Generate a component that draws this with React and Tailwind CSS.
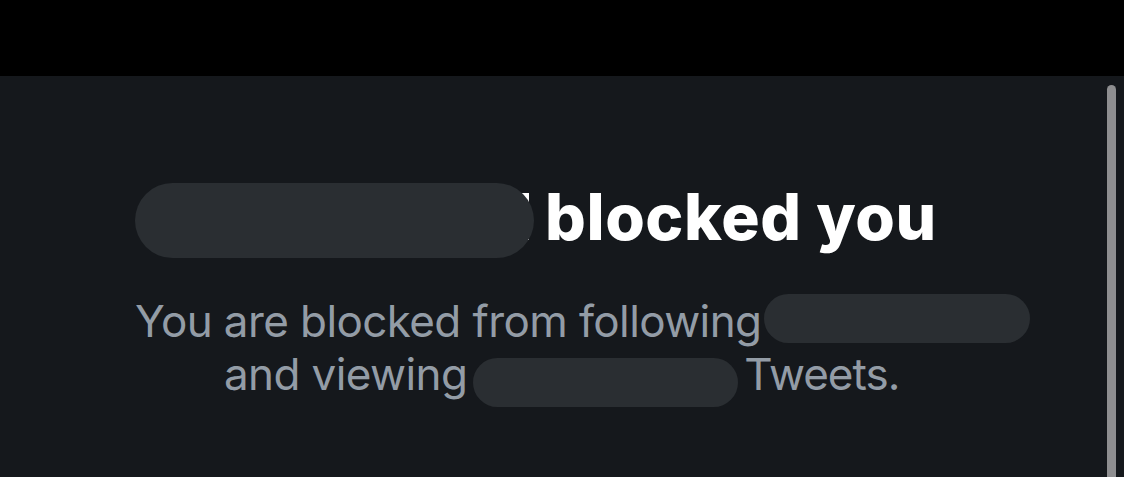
export default function App() {
  return (
    <div className="w-[1124px] h-[477px] bg-black flex flex-col overflow-hidden" style={{ fontFamily: "Inter, 'Liberation Sans', sans-serif" }}>
      {/* top bar */}
      <div className="h-[76px] shrink-0 bg-black" />

      {/* panel */}
      <div className="flex-1 flex bg-[#15181c]">
        <div className="flex-1 flex flex-col items-start pt-[107px] pl-[135px]">
          {/* heading */}
          <div className="flex items-start h-[75px]">
            <div className="relative z-10 w-[399px] h-[75px] rounded-full bg-[#2a2e32]" />
            <div className="w-[14px] h-[47px] mt-[10px] -ml-[19px] bg-white" />
            <h1 className="ml-[16px] -mt-[4px] text-[64px] leading-[75px] font-extrabold tracking-[0.6px] text-white">
              blocked you
            </h1>
          </div>

          {/* subtitle */}
          <div className="mt-[37px] flex items-start h-[53px]">
            <span className="text-[44px] leading-[53px] tracking-[-0.6px] text-[#939ca6] whitespace-nowrap">
              You are blocked from following
            </span>
            <div className="ml-[3px] -mt-[1px] w-[266px] h-[49px] rounded-full bg-[#2a2e32]" />
          </div>
          <div className="ml-[89px] flex items-start h-[53px]">
            <span className="text-[44px] leading-[53px] tracking-[-0.6px] text-[#939ca6] whitespace-nowrap">
              and viewing
            </span>
            <div className="ml-[6px] mt-[10px] w-[265px] h-[49px] rounded-full bg-[#2a2e32]" />
            <span className="ml-[6px] text-[44px] leading-[53px] tracking-[-1px] text-[#939ca6] whitespace-nowrap">
              Tweets.
            </span>
          </div>
        </div>

        {/* scrollbar */}
        <div className="w-[9px] mt-[9px] mr-[8px] rounded-t-full bg-[#8e8e90]" />
      </div>
    </div>
  );
}
